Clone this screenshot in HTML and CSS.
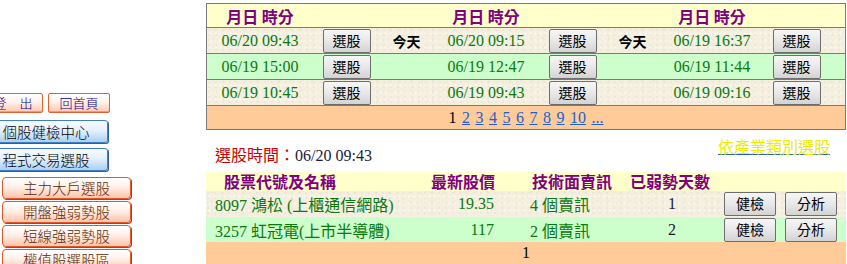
FILE: index.html
```html
<!DOCTYPE html>
<html lang="zh-Hant">
<head>
<meta charset="utf-8">
<title>選股</title>
<link rel="stylesheet" href="styles.css">
</head>
<body>
<div class="page">
  <aside class="side">
    <div class="side-inner">
      <div class="toprow">
        <span class="rbtn logout">登　出</span>
        <span class="rbtn home">回首頁</span>
      </div>
      <div class="bbtn">個股健檢中心</div>
      <div class="bbtn">程式交易選股</div>
      <div class="obtn">主力大戶選股</div>
      <div class="obtn">開盤強弱勢股</div>
      <div class="obtn">短線強弱勢股</div>
      <div class="obtn">權值股選股區</div>
    </div>
  </aside>

  <main class="main">
    <div class="ttable">
      <div class="trow thead">
        <div class="th">月日 時分</div><div></div><div></div>
        <div class="th">月日 時分</div><div></div><div></div>
        <div class="th">月日 時分</div><div></div><div></div>
      </div>
      <div class="trow tex">
        <div class="time">06/20 09:43</div><div class="c"><span class="gbtn">選股</span></div><div class="today">今天</div>
        <div class="time">06/20 09:15</div><div class="c"><span class="gbtn">選股</span></div><div class="today">今天</div>
        <div class="time">06/19 16:37</div><div class="c"><span class="gbtn">選股</span></div><div></div>
      </div>
      <div class="trow green">
        <div class="time">06/19 15:00</div><div class="c"><span class="gbtn">選股</span></div><div></div>
        <div class="time">06/19 12:47</div><div class="c"><span class="gbtn">選股</span></div><div></div>
        <div class="time">06/19 11:44</div><div class="c"><span class="gbtn">選股</span></div><div></div>
      </div>
      <div class="trow tex">
        <div class="time">06/19 10:45</div><div class="c"><span class="gbtn">選股</span></div><div></div>
        <div class="time">06/19 09:43</div><div class="c"><span class="gbtn">選股</span></div><div></div>
        <div class="time">06/19 09:16</div><div class="c"><span class="gbtn">選股</span></div><div></div>
      </div>
      <div class="pager">1 <a href="#">2</a> <a href="#">3</a> <a href="#">4</a> <a href="#">5</a> <a href="#">6</a> <a href="#">7</a> <a href="#">8</a> <a href="#">9</a> <a href="#">10</a> <a href="#">...</a></div>
    </div>

    <div class="midrow">
      <div class="seltime"><span class="red">選股時間：</span>06/20 09:43</div>
      <a class="ind" href="#">依產業類別選股</a>
    </div>

    <div class="stable">
      <div class="srow shead">
        <div class="h1">股票代號及名稱</div>
        <div class="h2">最新股價</div>
        <div class="h3">技術面賣訊</div>
        <div class="h4">已弱勢天數</div>
        <div></div>
      </div>
      <div class="srow tex">
        <div class="d1">8097 鴻松 (上櫃通信網路)</div>
        <div class="d2">19.35</div>
        <div class="d3">4 個賣訊</div>
        <div class="d4">1</div>
        <div class="d5"><span class="gbtn wb">健檢</span><span class="gbtn wb">分析</span></div>
      </div>
      <div class="srow green">
        <div class="d1">3257 虹冠電(上市半導體)</div>
        <div class="d2">117</div>
        <div class="d3">2 個賣訊</div>
        <div class="d4">2</div>
        <div class="d5"><span class="gbtn wb">健檢</span><span class="gbtn wb">分析</span></div>
      </div>
      <div class="sfoot">1</div>
    </div>
  </main>
</div>
</body>
</html>
```

FILE: styles.css
```css
html, body {
  margin: 0;
  padding: 0;
  background: #ffffff;
}
body {
  width: 847px;
  height: 264px;
  overflow: hidden;
  font-family: "Liberation Serif", "Noto Sans CJK TC", serif;
  font-size: 16px;
  color: #000;
}
.page {
  display: flex;
  align-items: flex-start;
}

/* ---------- sidebar ---------- */
.side {
  width: 206px;
  flex: none;
  overflow: hidden;
}
.side-inner {
  padding-top: 93px;
  display: flex;
  flex-direction: column;
  font-family: "Noto Sans CJK TC", "Liberation Sans", sans-serif;
  font-weight: 300;
}
.toprow {
  display: flex;
  gap: 5px;
  margin-left: -17px;
  margin-bottom: 7px;
}
.rbtn {
  display: block;
  box-sizing: border-box;
  height: 20px;
  line-height: 17px;
  font-size: 13px;
  text-align: center;
  color: #000080;
  border: 1px solid #e0622f;
  border-radius: 2px;
  background: linear-gradient(#ffffff 0%, #fff2ec 45%, #ffc7b0 100%);
  box-shadow: inset 0 -1px 0 #f19a78;
}
.logout { width: 60px; }
.home { width: 62px; }

.bbtn {
  box-sizing: border-box;
  width: 124px;
  margin-left: -16px;
  height: 23px;
  line-height: 21px;
  margin-bottom: 5px;
  font-size: 14.5px;
  text-align: center;
  color: #000;
  border: 1px solid #3f7fc4;
  border-radius: 3px;
  background: linear-gradient(#f7fbff 0%, #e4f1fd 45%, #a9d0f2 100%);
  box-shadow: 1px 1px 0 #2f5f97;
}
.obtn {
  box-sizing: border-box;
  width: 129px;
  margin-left: 2px;
  height: 22px;
  line-height: 20px;
  margin-bottom: 2px;
  font-size: 14.5px;
  text-align: center;
  color: #5a2a08;
  border: 1px solid #e2572a;
  border-radius: 4px;
  background: linear-gradient(#ffffff 0%, #fff0e8 45%, #ffc3a8 100%);
  box-shadow: 1px 1px 0 #b83c14;
}
.bbtn + .obtn { margin-top: 1px; }

/* ---------- main ---------- */
.main {
  width: 640px;
  flex: none;
  margin-top: 3px;
}
.tex {
  background-color: #f4efdf;
  background-image:
    radial-gradient(circle at 30% 40%, rgba(190, 175, 140, 0.12) 0 1px, transparent 1.5px),
    radial-gradient(circle at 70% 80%, rgba(255, 255, 255, 0.45) 0 1px, transparent 1.5px),
    radial-gradient(circle at 55% 15%, rgba(200, 185, 150, 0.10) 0 1px, transparent 1.5px);
  background-size: 7px 5px, 5px 7px, 11px 9px;
}
.green { background: #ccffcc; }

.ttable {
  box-sizing: border-box;
  width: 640px;
  border: 1px solid #7a7a7a;
}
.trow {
  display: grid;
  grid-template-columns: 106px 67px 53px 106px 67px 53px 106px 63px 1fr;
  align-items: center;
  height: 25px;
  border-bottom: 1px solid #7a7a7a;
}
.trow.thead {
  height: 23px;
  background: #ffffcc;
}
.th {
  text-align: center;
  font-weight: bold;
  color: #800080;
  font-size: 16px;
  font-family: "Noto Sans CJK TC", sans-serif;
  line-height: 20px;
}
.time {
  text-align: center;
  color: #0a7a0a;
  line-height: 20px;
}
.c {
  display: flex;
  justify-content: center;
}
.today {
  text-align: center;
  font-weight: bold;
  font-size: 14px;
  font-family: "Noto Sans CJK TC", sans-serif;
  line-height: 20px;
}
.gbtn {
  display: inline-block;
  box-sizing: border-box;
  width: 48px;
  height: 24px;
  line-height: 21px;
  text-align: center;
  font-size: 14px;
  font-family: "Noto Sans CJK TC", sans-serif;
  color: #000;
  border: 1px solid #6e6e6e;
  border-radius: 2px;
  background: linear-gradient(#f6f6f6 0%, #e8e8e8 50%, #d3d3d3 100%);
}
.pager {
  height: 23px;
  line-height: 23px;
  background: #ffcc99;
  text-align: center;
  word-spacing: 1.5px;
}
.pager a {
  color: #1f5fcf;
  text-decoration: underline;
}

.midrow {
  height: 42px;
  display: flex;
  justify-content: space-between;
}
.seltime {
  align-self: flex-end;
  margin-bottom: 6px;
  padding-left: 9px;
  line-height: 20px;
  color: #1a1a3a;
}
.red {
  color: #cc0000;
  font-family: "Noto Sans CJK TC", sans-serif;
  font-size: 16px;
}
.ind {
  align-self: flex-start;
  margin-top: 6px;
  margin-right: 16px;
  line-height: 20px;
  font-family: "Noto Sans CJK TC", sans-serif;
  color: #ecec00;
  text-decoration: underline;
  text-decoration-color: #1f5fcf;
}

.stable {
  width: 640px;
}
.srow {
  display: grid;
  grid-template-columns: 214px 100px 104px 96px 1fr;
  align-items: center;
  height: 25px;
}
.srow.shead {
  height: 19px;
  background: #ffffcc;
  font-weight: bold;
  color: #800080;
  font-family: "Noto Sans CJK TC", sans-serif;
  line-height: 19px;
}
.h1 { padding-left: 18px; }
.h2 { text-align: right; padding-right: 25px; }
.h3 { padding-left: 12px; }
.h4 { padding-left: 6px; }
.srow.tex { height: 26px; }
.d1 { padding-left: 9px; color: #0a7a0a; }
.d2 { text-align: right; padding-right: 26px; color: #0a7a0a; }
.d3 { padding-left: 10px; color: #0a7a0a; }
.d4 { text-align: center; color: #1a1a3a; }
.d5 {
  display: flex;
  gap: 9px;
  padding-left: 4px;
}
.gbtn.wb { width: 52px; }
.sfoot {
  height: 22px;
  line-height: 22px;
  background: #ffcc99;
  text-align: center;
}
```
